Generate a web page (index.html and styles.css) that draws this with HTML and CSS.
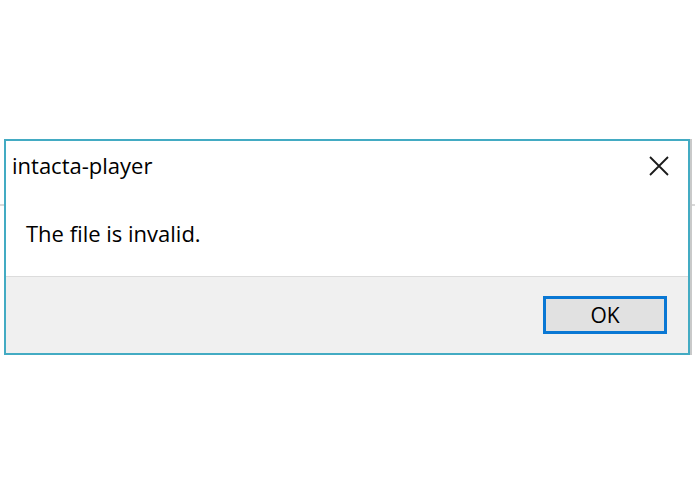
FILE: index.html
```html
<!DOCTYPE html>
<html>
<head>
<meta charset="utf-8">
<link rel="stylesheet" href="styles.css">
</head>
<body>
<div class="dialog">
  <div class="titlebar">
    <span class="title">intacta-player</span>
    <span class="close">
      <svg width="22" height="22" viewBox="0 0 22 22"><path d="M2 2 L20 20 M20 2 L2 20" stroke="#1a1a1a" stroke-width="1.8" fill="none"/></svg>
    </span>
  </div>
  <div class="content">
    <p class="message">The file is invalid.</p>
  </div>
  <div class="footer">
    <button class="ok">OK</button>
  </div>
</div>
</body>
</html>
```
FILE: styles.css
```css
html, body {
  margin: 0;
  padding: 0;
  background: #fff;
}
body {
  width: 695px;
  height: 494px;
  background: linear-gradient(to bottom, transparent 204px, #d9d9d9 204px, #d9d9d9 206px, transparent 206px);
  font-family: "Open Sans", "Noto Sans", sans-serif;
  overflow: hidden;
}
.dialog {
  margin: 139px 0 0 4px;
  width: 682px;
  border: 2px solid #43abc3;
  background: #fff;
  box-shadow: 2px 0 0 #c9c9c9;
}
.titlebar {
  height: 50px;
  display: flex;
  align-items: center;
  justify-content: space-between;
  padding: 0 18px 0 6px;
}
.title {
  font-size: 22px;
  color: #000;
  margin-top: -2px;
}
.close {
  display: flex;
  width: 22px;
  height: 22px;
}
.content {
  height: 85px;
  padding-left: 20px;
  display: flex;
  align-items: center;
  box-sizing: border-box;
}
.message {
  margin: 0 0 1px 0;
  font-size: 22px;
  color: #000;
}
.footer {
  border-top: 1px solid #dcdcdc;
  background: #f0f0f0;
  height: 76px;
  display: flex;
  justify-content: flex-end;
  align-items: center;
  padding-right: 21px;
}
.ok {
  width: 124px;
  height: 38px;
  border: 3px solid #0a78d4;
  background: #e1e1e1;
  font-family: inherit;
  font-size: 21px;
  color: #000;
  padding: 0;
}
```
